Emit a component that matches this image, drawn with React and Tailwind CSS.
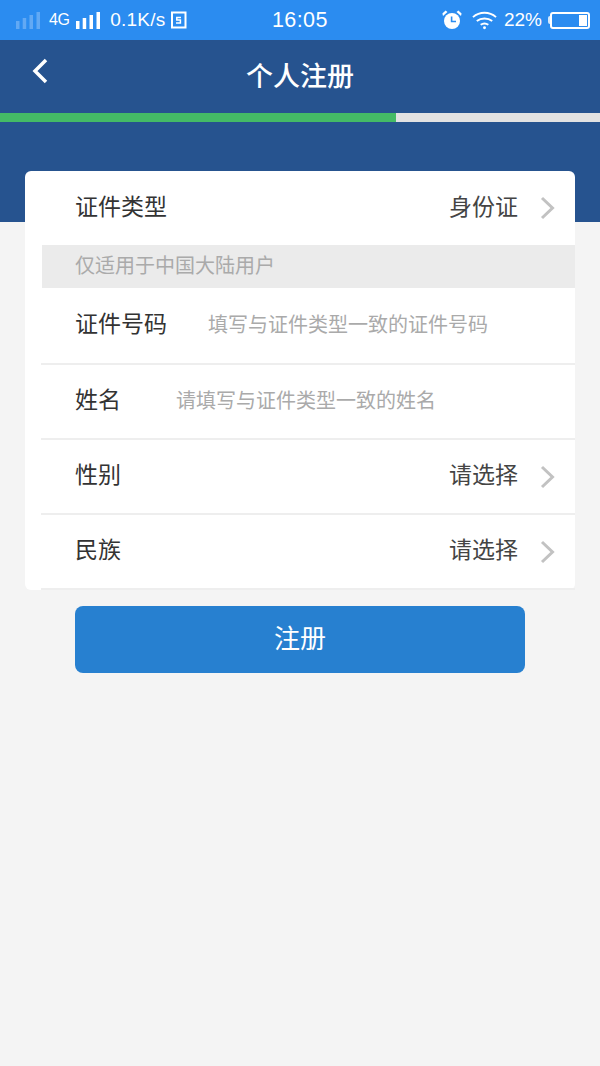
const font = "font-['Noto_Sans_CJK_SC','Noto_Sans',sans-serif]";

function SignalBars({ className }) {
  return (
    <svg width="24" height="17" viewBox="0 0 24 17" className={className} fill="currentColor">
      <rect x="0" y="9" width="3.500" height="8" />
      <rect x="6.700" y="6" width="3.500" height="11" />
      <rect x="13.500" y="3" width="3.500" height="14" />
      <rect x="20.500" y="0" width="3.500" height="17" />
    </svg>
  );
}

function Chevron() {
  return (
    <svg width="16" height="24" viewBox="0 0 16 24" className="ml-[22px] mr-[19px] shrink-0" fill="none" stroke="#c2c2c2" strokeWidth="3">
      <path d="M2 2l10.500 10L2 22" />
    </svg>
  );
}

function StatusBar() {
  return (
    <div className="h-10 bg-[#2b8cf0] flex items-center text-white font-['Liberation_Sans',sans-serif] relative">
      <div className="flex items-center pl-4">
        <SignalBars className="text-[#62a9f4]" />
        <span className="ml-[9px] text-[16px] tracking-[-0.5px]">4G</span>
        <SignalBars className="ml-[7px]" />
        <span className="ml-[10px] text-[19px] tracking-[0.2px]">0.1K/s</span>
        <svg width="17" height="18" viewBox="0 0 17 18" className="ml-[5px]" fill="none" stroke="currentColor">
          <path d="M1 1.500h14.500v15H2V1" strokeWidth="2" />
          <path d="M11 6.500H6.800v2.500h3.600v3H6" strokeWidth="1.500" />
        </svg>
      </div>
      <span className="absolute left-[272px] text-[21.500px] tracking-[0.4px]">16:05</span>
      <div className="ml-auto flex items-center pr-[10px]">
        <svg width="20" height="20" viewBox="0 0 20 20" fill="currentColor">
          <circle cx="10" cy="11" r="8" />
          <path d="M1 6 5.500 2 3.600 .6 .4 3.400zM19 6 14.500 2 16.400 .6l3.200 2.800z" />
          <path d="M9.600 6.500v5h4.400" fill="none" stroke="#2b8cf0" strokeWidth="1.600" />
        </svg>
        <svg width="25" height="20" viewBox="0 0 26 20" className="ml-[10px]" fill="none" stroke="currentColor" strokeWidth="2">
          <path d="M1 7C8 1 18 1 25 7" />
          <path d="M5 11c4.500-3.500 11.500-3.500 16 0" />
          <path d="M9 15c2.500-1.800 5.500-1.800 8 0" />
          <circle cx="13" cy="18" r="1.500" fill="currentColor" stroke="none" />
        </svg>
        <span className="ml-[7px] text-[19px]">22%</span>
        <div className="ml-[6px] w-[2px] h-[8px] bg-white/80 rounded-l-sm" />
        <div className="w-[40px] h-[17px] border-2 border-white rounded-[3px] flex justify-end p-[1px]">
          <div className="w-[8px] bg-white" />
        </div>
      </div>
    </div>
  );
}

function Row({ label, value, placeholder, gap, height = "h-[75px]" }) {
  return (
    <div className={`ml-4 ${height} flex items-center border-b-2 border-[#eeeeee]`}>
      <span className="ml-[34px] mb-[6px] text-[23px] text-[#333333] shrink-0">{label}</span>
      {placeholder && (
        <span className={`${gap} mb-[3px] text-[20px] text-[#aaaaaa]`}>{placeholder}</span>
      )}
      {value && (
        <>
          <span className="ml-auto mb-[6px] text-[23px] text-[#444444]">{value}</span>
          <Chevron />
        </>
      )}
    </div>
  );
}

export default function App() {
  return (
    <div className={`w-[600px] h-[1066px] bg-[#f4f4f4] overflow-hidden ${font}`}>
      <StatusBar />

      <div className="h-[182px] bg-[#26538f]">
        <div className="h-[73px] flex items-center justify-center relative">
          <svg width="20" height="28" viewBox="0 0 20 28" className="absolute left-[31px] top-[17px]" fill="none" stroke="white" strokeWidth="3.500">
            <path d="M15 3 4 14l11 11" />
          </svg>
          <h1 className="mb-[2px] text-[27px] font-medium text-white">个人注册</h1>
        </div>
        <div className="h-[9px] bg-[#e2e2e2]">
          <div className="w-[396px] h-full bg-[#44bb66]" />
        </div>
      </div>

      <div className="mx-[25px] -mt-[51px] relative bg-white rounded-[6px] h-[419px]">
        <div className="h-[74px] flex items-center">
          <span className="ml-[50px] mb-[6px] text-[23px] text-[#333333]">证件类型</span>
          <span className="ml-auto mb-[6px] text-[23px] text-[#444444]">身份证</span>
          <Chevron />
        </div>
        <div className="ml-[17px] h-[43px] bg-[#ebebeb] flex items-center pl-[33px] pb-1 text-[20px] text-[#aaaaaa]">
          仅适用于中国大陆用户
        </div>
        <Row label="证件号码" placeholder="填写与证件类型一致的证件号码" gap="ml-[41px]" height="h-[77px]" />
        <Row label="姓名" placeholder="请填写与证件类型一致的姓名" gap="ml-[55px]" />
        <Row label="性别" value="请选择" />
        <Row label="民族" value="请选择" />
      </div>

      <button className="block mx-auto mt-4 w-[450px] h-[67px] pb-[6px] rounded-[8px] bg-[#2780d0] text-white text-[26px]">
        注册
      </button>
    </div>
  );
}
